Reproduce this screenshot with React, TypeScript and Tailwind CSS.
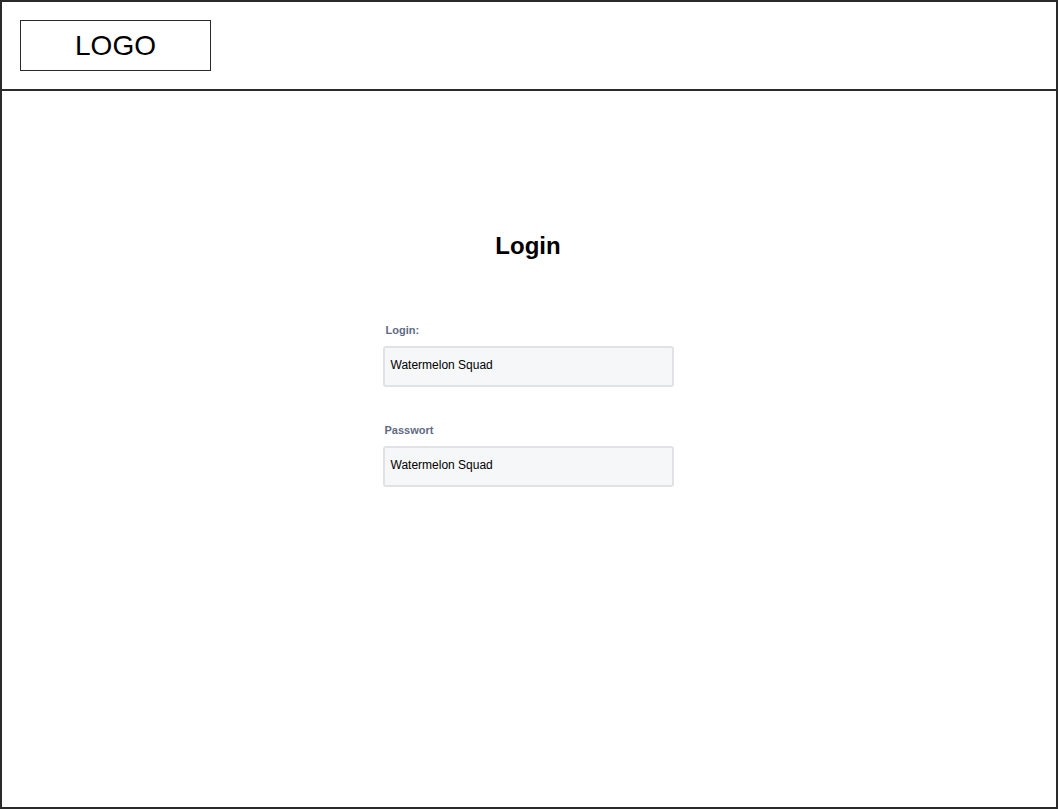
export default function App() {
  return (
    <div className="h-[810px] w-[1059px] bg-white font-['Liberation_Sans',Arial,sans-serif]">
      <div className="flex h-[809px] w-[1058px] flex-col border-2 border-[#2a2a2a]">
        {/* header */}
        <header className="h-[89px] shrink-0 border-b-2 border-[#2a2a2a] pl-[18px] pt-[18px]">
          <div className="flex h-[51px] w-[191px] items-center justify-center border-[1.5px] border-[#2a2a2a] text-[28px] leading-none text-black">
            LOGO
          </div>
        </header>

        {/* main */}
        <main className="flex flex-1 flex-col items-center pr-[2px] pt-[141px]">
          <h1 className="text-[24px] font-bold leading-[28px] text-black">Login</h1>

          <form className="mt-[62px] flex w-[291px] flex-col">
            <label className="pl-[3px] text-[11px] font-bold leading-[16px] text-[#5f6b85]">Login:</label>
            <div className="mt-[8px] flex h-[41px] items-center rounded-[3px] border-2 border-[#e0e2e6] bg-[#f6f7f9] px-[6px] pb-[4px] text-[12px] text-black">
              Watermelon Squad
            </div>

            <label className="mt-[35px] pl-[2px] text-[11px] font-bold leading-[16px] text-[#5f6b85]">Passwort</label>
            <div className="mt-[8px] flex h-[41px] items-center rounded-[3px] border-2 border-[#e0e2e6] bg-[#f6f7f9] px-[6px] pb-[4px] text-[12px] text-black">
              Watermelon Squad
            </div>
          </form>
        </main>
      </div>
    </div>
  );
}
